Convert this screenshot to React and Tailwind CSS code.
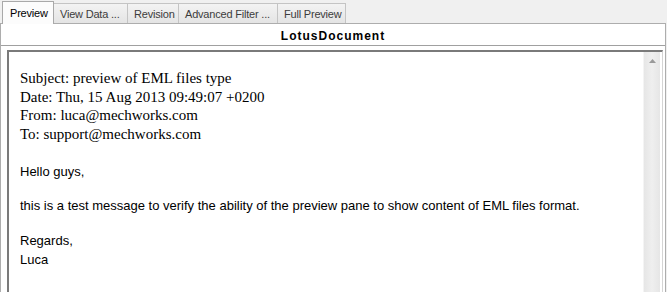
export default function App() {
  const tabs = [
    { label: "View Data ...", w: "w-[74px]" },
    { label: "Revision", w: "w-[51px]" },
    { label: "Advanced Filter ...", w: "w-[99px]" },
    { label: "Full Preview", w: "w-[68px]" },
  ];
  return (
    <div className="w-[667px] h-[292px] bg-[#f0f0f0] overflow-hidden font-['Liberation_Sans',Arial,sans-serif] flex flex-col">
      {/* tab strip */}
      <div className="h-[23px] flex items-end pl-[2px] shrink-0">
        <div className="relative z-10 -mb-[1px] h-[23px] w-[52px] bg-[#fcfcfc] border-t border-l border-r border-[#a9a9a9] text-[11px] tracking-[-0.2px] text-black pl-[7px] pt-[5px] leading-[13px]">
          Preview
        </div>
        {tabs.map((t) => (
          <div
            key={t.label}
            className={`${t.w} h-[20px] bg-gradient-to-b from-[#f3f3f3] to-[#e4e4e4] border-t border-r border-[#c4c4c4] text-[11px] tracking-[-0.2px] text-[#3c3c3c] pl-[6px] pt-[4px] leading-[13px] whitespace-nowrap overflow-hidden`}
          >
            {t.label}
          </div>
        ))}
      </div>
      {/* panel */}
      <div className="flex-1 mr-[1px] border-t border-l border-r border-[#adadad] bg-white flex flex-col">
        <div className="h-[22px] shrink-0 border-b border-[#a0a0a0] flex items-center justify-center">
          <span className="text-[12px] font-bold tracking-[1px] text-black leading-[14px] pt-[2px]">
            LotusDocument
          </span>
        </div>
        <div className="flex-1 pl-[6px] pt-[4px] pr-[2px] bg-white">
          <div className="h-full border-t-2 border-l-2 border-[#7a7a7a] border-r border-r-[#d4d4d4] flex">
            <div className="flex-1 pl-[11px] pt-[17px] text-black">
              <div className="font-['Liberation_Serif','Times_New_Roman',serif] text-[15px] leading-[18.7px]">
                <div>Subject: preview of EML files type</div>
                <div>Date: Thu, 15 Aug 2013 09:49:07 +0200</div>
                <div>From: luca@mechworks.com</div>
                <div>To: support@mechworks.com</div>
              </div>
              <div className="font-['Liberation_Sans',Arial,sans-serif] text-[13px] leading-[18.5px] mt-[19px]">
                <p>Hello guys,</p>
                <p className="mt-[16px]">
                  this is a test message to verify the ability of the preview pane to show content of EML files format.
                </p>
                <p className="mt-[16px]">Regards,</p>
                <p className="mt-[1px]">Luca</p>
              </div>
            </div>
            <div className="w-[17px] mr-[2px] bg-gradient-to-r from-[#e6e6e6] via-[#efefef] to-[#e6e6e6] border-l border-[#f4f4f4] flex flex-col items-center pt-[7px]">
              <svg width="7" height="4" viewBox="0 0 7 4">
                <path d="M3.5 0 L7 4 L0 4 Z" fill="#9a9a9a" />
              </svg>
            </div>
          </div>
        </div>
      </div>
    </div>
  );
}
